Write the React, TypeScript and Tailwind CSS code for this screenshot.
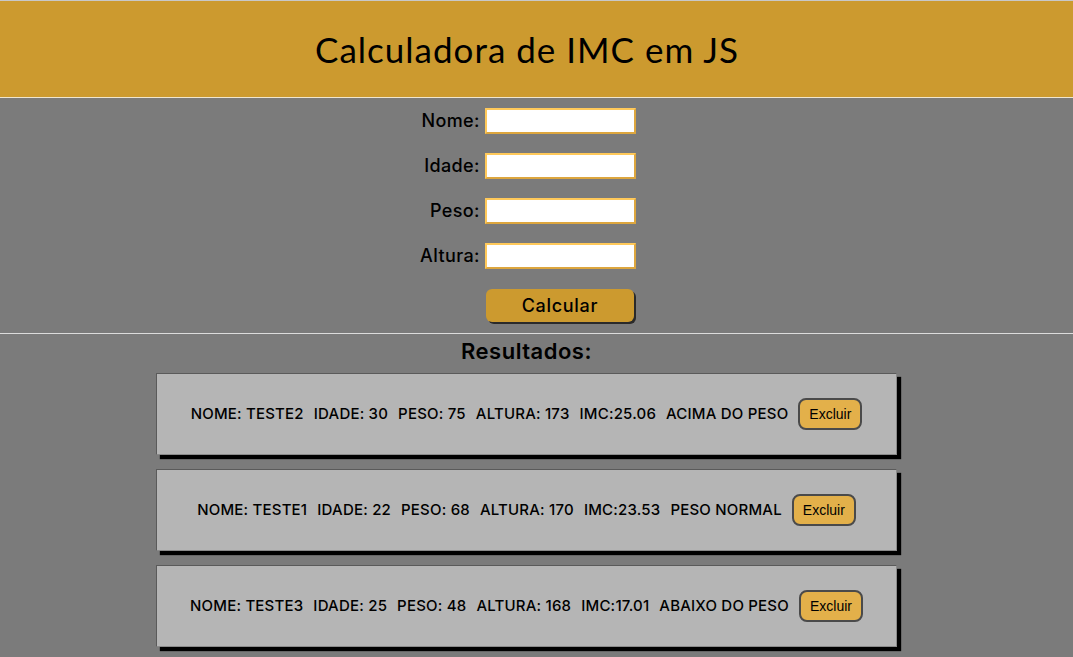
import React from "react";

const results = [
  { nome: "TESTE2", idade: 30, peso: 75, altura: 173, imc: "25.06", cls: "ACIMA DO PESO" },
  { nome: "TESTE1", idade: 22, peso: 68, altura: 170, imc: "23.53", cls: "PESO NORMAL" },
  { nome: "TESTE3", idade: 25, peso: 48, altura: 168, imc: "17.01", cls: "ABAIXO DO PESO" },
];

const fields = ["Nome:", "Idade:", "Peso:", "Altura:"];

export default function App() {
  return (
    <div className="min-h-[657px] w-full bg-[#7b7b7b] font-['Inter',sans-serif] text-black">
      <header className="h-[98px] w-full border-t border-b border-t-[#c8c8c8] border-b-[#efe6d0] bg-[#cc9a2f]">
        <div className="flex h-full w-[1054px] items-center justify-center">
          <h1 className="font-['Lato',sans-serif] text-[35px] leading-[40px] font-normal tracking-[1px]">
            Calculadora de IMC em JS
          </h1>
        </div>
      </header>

      <div className="w-[1056px] pt-[10px]">
        <div className="mx-auto grid w-fit grid-cols-[auto_151px] items-center gap-x-[5px] gap-y-[19px]">
          {fields.map((f) => (
            <React.Fragment key={f}>
              <label className="text-right text-[18px] leading-[26px] font-medium tracking-[0.4px]">{f}</label>
              <input
                className="h-[26px] w-[151px] border-2 border-t-[#ffc95a] border-l-[#ffc95a] border-r-[#dda63e] border-b-[#dda63e] bg-white outline-none"
                type="text"
              />
            </React.Fragment>
          ))}
          <div />
          <button className="mt-[1px] ml-[1px] h-[33px] w-[148px] rounded-[6px] bg-[#cc9a2f] text-[18px] leading-[26px] font-medium tracking-[0.7px] shadow-[2px_2px_0_#2a2a2a]">
            Calcular
          </button>
        </div>
      </div>

      <div className="mt-[11px] h-px w-full bg-[#dcdcdc]" />

      <div className="w-[1053px]">
        <h2 className="pt-[3px] text-center text-[22px] leading-[28px] font-semibold tracking-[0.5px]">Resultados:</h2>
        <div className="mx-auto mt-[8px] flex w-[741px] flex-col gap-[14px] pb-[10px]">
          {results.map((r) => (
            <div
              key={r.nome}
              className="flex h-[82px] items-center justify-center gap-[10px] border border-t-[#5a5a5a] border-l-[#5a5a5a] border-r-[#8a8a8a] border-b-[#8a8a8a] bg-[#b5b5b5] shadow-[4px_4px_1px_#000]"
            >
              <span className="text-[15px] font-medium tracking-[0.2px]">NOME: {r.nome}</span>
              <span className="text-[15px] font-medium tracking-[0.2px]">IDADE: {r.idade}</span>
              <span className="text-[15px] font-medium tracking-[0.2px]">PESO: {r.peso}</span>
              <span className="text-[15px] font-medium tracking-[0.2px]">ALTURA: {r.altura}</span>
              <span className="text-[15px] font-medium tracking-[0.2px]">IMC:{r.imc}</span>
              <span className="text-[15px] font-medium tracking-[0.2px]">{r.cls}</span>
              <button className="h-[32px] w-[64px] rounded-[8px] border-2 border-[#4a4a4a] bg-[#e3b04a] font-['Liberation_Sans',sans-serif] text-[14px]">
                Excluir
              </button>
            </div>
          ))}
        </div>
      </div>
    </div>
  );
}
